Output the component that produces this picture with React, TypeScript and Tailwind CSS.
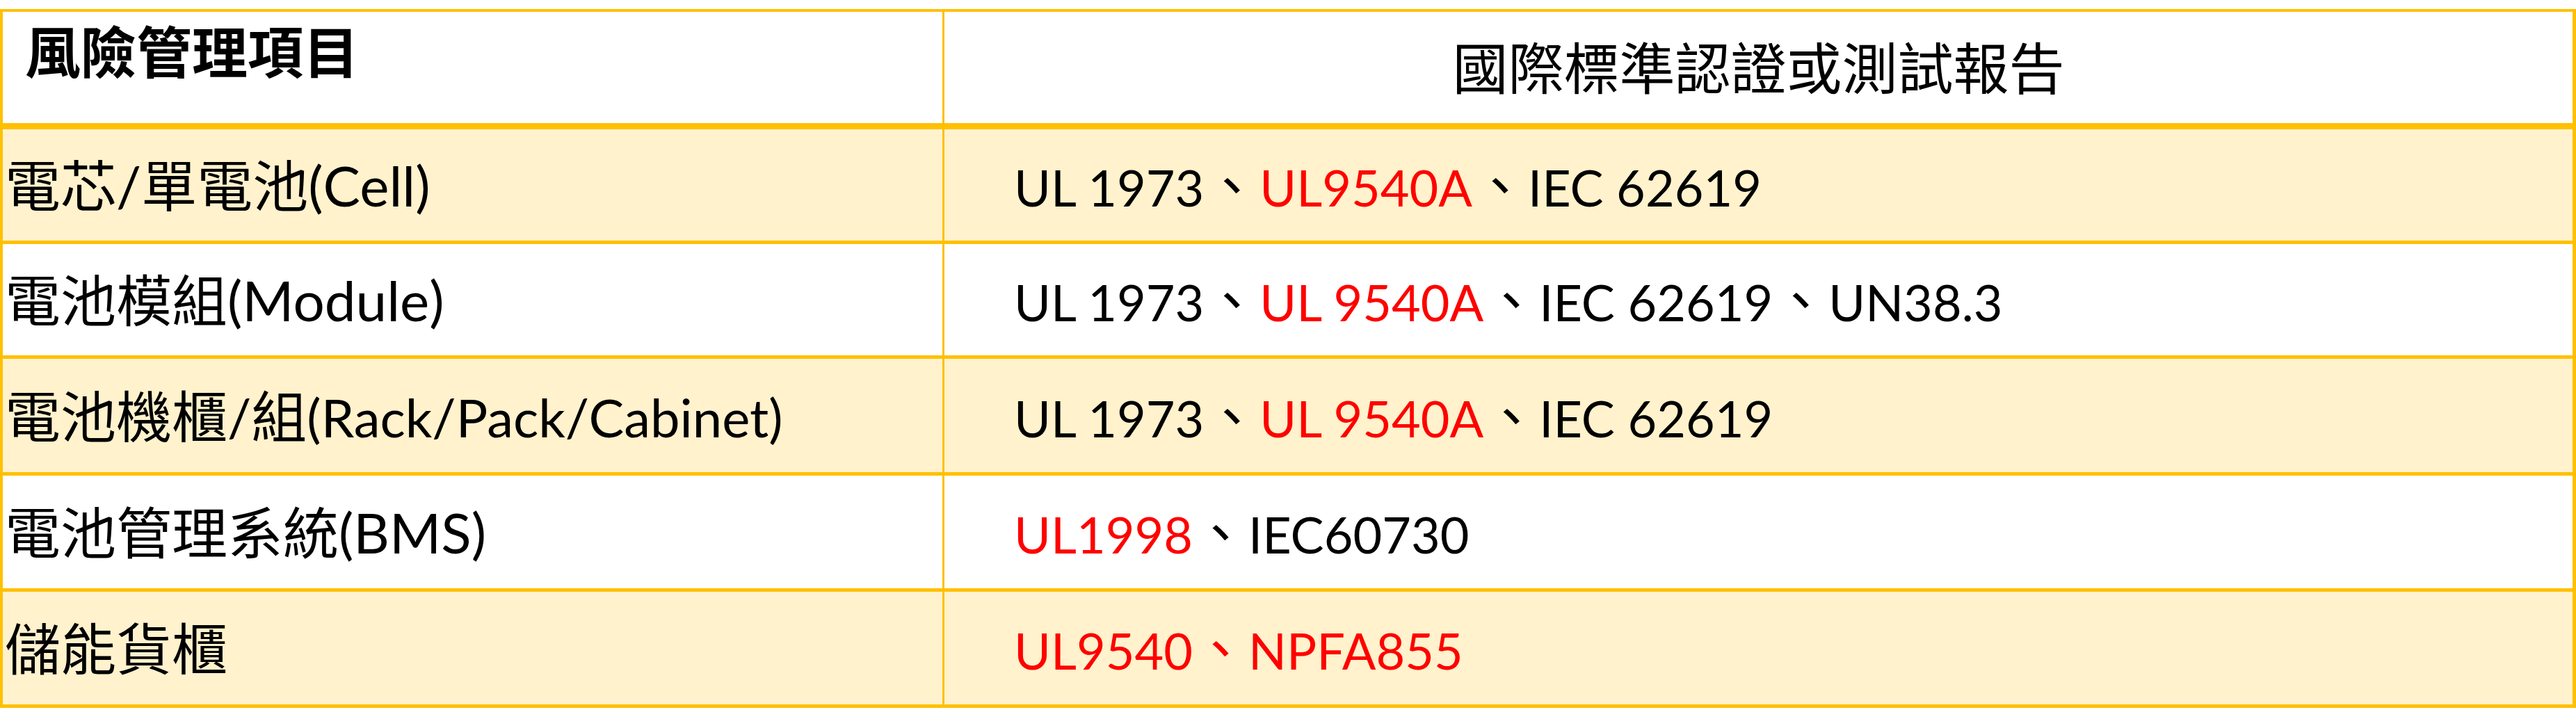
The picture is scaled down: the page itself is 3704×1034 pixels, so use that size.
const CJK_SPLIT = /([\u2E80-\u9FFF\uF900-\uFAFF\uFF00-\uFFEF\u3000-\u303F]+)/;
const CJK_TEST = /[\u2E80-\u9FFF\uF900-\uFAFF\uFF00-\uFFEF\u3000-\u303F]/;

// CJK runs stay at 80px; Latin runs get their own size (Lato 72px ~ Calibri 80px)
function Mixed({ text, latin = 'text-[72px]' }: { text: string; latin?: string }) {
  return (
    <>
      {text
        .split(CJK_SPLIT)
        .filter(Boolean)
        .map((part, i) =>
          CJK_TEST.test(part) ? (
            <span key={i} className="text-[80px]">
              {part}
            </span>
          ) : (
            <span key={i} className={latin}>
              {part}
            </span>
          )
        )}
    </>
  );
}

interface Piece {
  text: string;
  red?: boolean;
}

interface Row {
  item: string;
  itemLatin: string;
  standards: Piece[];
  height: string;
  shaded: boolean;
  last?: boolean;
}

const rows: Row[] = [
  {
    item: '電芯/單電池(Cell)',
    itemLatin: 'text-[80px]',
    height: 'h-[165px]',
    shaded: true,
    standards: [{ text: 'UL 1973、' }, { text: 'UL9540A', red: true }, { text: '、IEC 62619' }],
  },
  {
    item: '電池模組(Module)',
    itemLatin: 'text-[80px]',
    height: 'h-[165px]',
    shaded: false,
    standards: [{ text: 'UL 1973、' }, { text: 'UL 9540A', red: true }, { text: '、IEC 62619、UN38.3' }],
  },
  {
    item: '電池機櫃/組(Rack/Pack/Cabinet)',
    itemLatin: 'text-[76px]',
    height: 'h-[168px]',
    shaded: true,
    standards: [{ text: 'UL 1973、' }, { text: 'UL 9540A', red: true }, { text: '、IEC 62619' }],
  },
  {
    item: '電池管理系統(BMS)',
    itemLatin: 'text-[80px]',
    height: 'h-[167px]',
    shaded: false,
    standards: [{ text: 'UL1998', red: true }, { text: '、IEC60730' }],
  },
  {
    item: '儲能貨櫃',
    itemLatin: 'text-[80px]',
    height: 'h-[162px]',
    shaded: true,
    last: true,
    standards: [{ text: 'UL9540、NPFA855', red: true }],
  },
];

export default function App() {
  return (
    <div className="min-h-screen bg-white pt-[13px] text-black font-[Lato,'Noto_Sans_CJK_TC',sans-serif]">
      <div className="border-t-[4px] border-l-[4px] border-r-[5px] border-b-[5px] border-[#FFC000]">
        {/* Header */}
        <div className="flex h-[169px] border-b-[9px] border-[#FFC000] bg-white">
          <div className="w-[1354px] shrink-0 border-r-[3px] border-[#FFC000] pl-[32px] pt-[17px]">
            <div className="leading-none font-bold whitespace-nowrap">
              <Mixed text="風險管理項目" />
            </div>
          </div>
          <div className="flex flex-1 items-center justify-center">
            <div className="leading-none whitespace-nowrap">
              <Mixed text="國際標準認證或測試報告" />
            </div>
          </div>
        </div>

        {/* Body */}
        {rows.map((row) => (
          <div
            key={row.item}
            className={`flex ${row.height} ${row.last ? '' : 'border-b-[5px] border-[#FFC000]'} ${
              row.shaded ? 'bg-[#FFF2CC]' : 'bg-white'
            }`}
          >
            <div className="flex w-[1354px] shrink-0 items-center border-r-[3px] border-[#FFC000] pl-[3px]">
              <div className="leading-none whitespace-nowrap">
                <Mixed text={row.item} latin={row.itemLatin} />
              </div>
            </div>
            <div className="flex flex-1 items-center pl-[100px]">
              <div className="leading-none whitespace-nowrap">
                {row.standards.map((p, i) => (
                  <span key={i} className={p.red ? 'text-[#FF0000]' : 'text-black'}>
                    <Mixed text={p.text} />
                  </span>
                ))}
              </div>
            </div>
          </div>
        ))}
      </div>
    </div>
  );
}
